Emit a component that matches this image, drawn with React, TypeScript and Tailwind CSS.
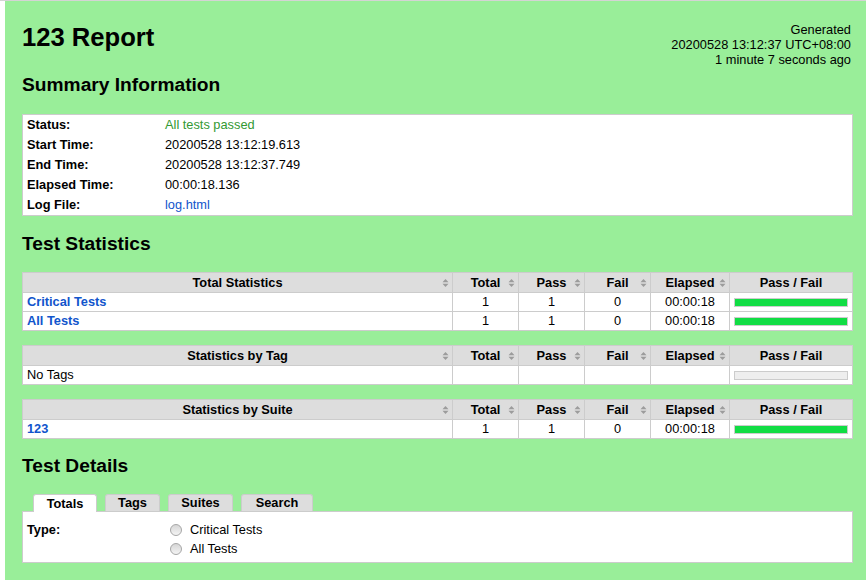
import React from 'react';

type StatRow = {
  name: string;
  link?: boolean;
  total?: number;
  pass?: number;
  fail?: number;
  elapsed?: string;
  empty?: boolean;
};

const SortIcon = () => (
  <svg width="7" height="9" viewBox="0 0 7 9" className="absolute right-[3px] top-1/2 -translate-y-1/2">
    <path d="M0.5 3.8 L3.5 0.5 L6.5 3.8 Z" fill="#9c9c9c" />
    <path d="M0.5 5.2 L3.5 8.5 L6.5 5.2 Z" fill="#9c9c9c" />
  </svg>
);

const StatTable: React.FC<{ title: string; rows: StatRow[]; className?: string }> = ({ title, rows, className }) => {
  const cell = 'border-r border-b border-[#ccc] flex items-center';
  const head = `${cell} relative justify-center h-[20px] bg-[#ddd] font-bold`;
  return (
    <div className={`grid grid-cols-[1fr_66px_66px_66px_79px_123px] border-t border-l border-[#ccc] bg-white ${className ?? ''}`}>
      <div className={head}>{title}<SortIcon /></div>
      <div className={head}>Total<SortIcon /></div>
      <div className={head}>Pass<SortIcon /></div>
      <div className={head}>Fail<SortIcon /></div>
      <div className={head}>Elapsed<SortIcon /></div>
      <div className={head}>Pass / Fail</div>
      {rows.map(r => (
        <React.Fragment key={r.name}>
          <div className={`${cell} h-[19px] pl-[4px] ${r.link ? 'font-bold text-[#1155cc]' : ''}`}>{r.name}</div>
          <div className={`${cell} h-[19px] justify-center`}>{r.total}</div>
          <div className={`${cell} h-[19px] justify-center`}>{r.pass}</div>
          <div className={`${cell} h-[19px] justify-center`}>{r.fail}</div>
          <div className={`${cell} h-[19px] justify-center`}>{r.elapsed}</div>
          <div className={`${cell} h-[19px] px-[4px]`}>
            <div className={`w-full h-[9px] border border-[#ccc] ${r.empty ? 'bg-[#eee]' : 'bg-[#11dd44]'}`}></div>
          </div>
        </React.Fragment>
      ))}
    </div>
  );
};

const summary: [string, React.ReactNode][] = [
  ['Status:', <span className="text-[#339933]">All tests passed</span>],
  ['Start Time:', '20200528 13:12:19.613'],
  ['End Time:', '20200528 13:12:37.749'],
  ['Elapsed Time:', '00:00:18.136'],
  ['Log File:', <span className="text-[#1155cc]">log.html</span>],
];

const Radio: React.FC<{ label: string }> = ({ label }) => (
  <div className="flex items-center h-[19px]">
    <span className="w-[12px] h-[12px] ml-[5px] mr-[8px] rounded-full border border-[#a6a6a6] bg-linear-to-b from-[#d6d6d6] to-[#f4f4f4]"></span>
    <span>{label}</span>
  </div>
);

export default function App() {
  const tabs = ['Totals', 'Tags', 'Suites', 'Search'];
  const tabW = ['w-[64px]', 'w-[55px]', 'w-[65px]', 'w-[72px]'];

  return (
    <div className="bg-white border-t border-[#d4d4d4] pl-[5px] font-['Liberation_Sans',Arial,sans-serif] text-[12.8px] text-black">
      <div className="bg-[#99ee99] min-h-[579px] pl-[17px] pr-[13px] pt-[21px]">
        <div className="flex justify-between items-start">
          <h1 className="text-[25.6px] font-bold leading-[30px]">123 Report</h1>
          <div className="text-right leading-[15px] pr-[2px]">
            <div>Generated</div>
            <div>20200528 13:12:37 UTC+08:00</div>
            <div>1 minute 7 seconds ago</div>
          </div>
        </div>

        <h2 className="mt-[6px] text-[19.2px] font-bold leading-[24px]">Summary Information</h2>
        <div className="mt-[17px] bg-white border border-[#ccc] pl-[4px]">
          {summary.map(([k, v]) => (
            <div key={k} className="flex leading-[20px]">
              <div className="w-[138px] font-bold">{k}</div>
              <div>{v}</div>
            </div>
          ))}
        </div>

        <h2 className="mt-[16px] text-[19.2px] font-bold leading-[24px]">Test Statistics</h2>
        <StatTable
          className="mt-[16px]"
          title="Total Statistics"
          rows={[
            { name: 'Critical Tests', link: true, total: 1, pass: 1, fail: 0, elapsed: '00:00:18' },
            { name: 'All Tests', link: true, total: 1, pass: 1, fail: 0, elapsed: '00:00:18' },
          ]}
        />
        <StatTable className="mt-[14px]" title="Statistics by Tag" rows={[{ name: 'No Tags', empty: true }]} />
        <StatTable
          className="mt-[14px]"
          title="Statistics by Suite"
          rows={[{ name: '123', link: true, total: 1, pass: 1, fail: 0, elapsed: '00:00:18' }]}
        />

        <h2 className="mt-[15px] text-[19.2px] font-bold leading-[24px]">Test Details</h2>
        <div className="mt-[16px] flex items-end gap-2 pl-[11px]">
          {tabs.map((t, i) => (
            <div
              key={t}
              className={`${tabW[i]} flex items-center justify-center font-bold border border-b-0 border-[#ccc] rounded-t-[3px] ${
                i === 0 ? 'relative z-10 h-[18px] -mb-px bg-white' : 'h-[17px] bg-[#ddd]'
              }`}
            >
              {t}
            </div>
          ))}
        </div>
        <div className="bg-white border border-[#ccc] pl-[4px] pt-[8px] pb-[4px] flex">
          <div className="w-[138px] font-bold leading-[19px]">Type:</div>
          <div>
            <Radio label="Critical Tests" />
            <Radio label="All Tests" />
          </div>
        </div>
      </div>
    </div>
  );
}
